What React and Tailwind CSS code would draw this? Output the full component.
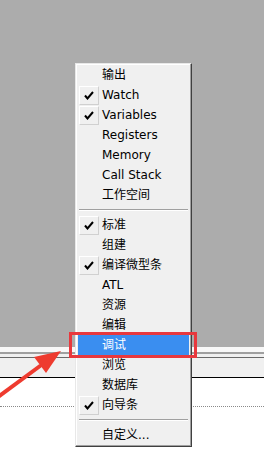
import React from 'react';

const items = [
  { label: '输出' },
  { label: 'Watch', checked: true },
  { label: 'Variables', checked: true },
  { label: 'Registers' },
  { label: 'Memory' },
  { label: 'Call Stack' },
  { label: '工作空间' },
  { sep: true },
  { label: '标准', checked: true },
  { label: '组建' },
  { label: '编译微型条', checked: true },
  { label: 'ATL' },
  { label: '资源' },
  { label: '编辑' },
  { label: '调试', active: true },
  { label: '浏览' },
  { label: '数据库' },
  { label: '向导条', checked: true },
  { sep: true },
  { label: '自定义...' },
];

function Check() {
  return (
    <svg width="10" height="9" viewBox="0 0 10 9">
      <path d="M1 4.5 L3.5 7.5 L9 1" fill="none" stroke="#000" strokeWidth="2" />
    </svg>
  );
}

export default function App() {
  return (
    <div
      className="relative w-[264px] h-[449px] overflow-hidden bg-white text-[12px] text-black"
      style={{ fontFamily: '"DejaVu Sans", "Noto Sans CJK SC", sans-serif' }}
    >
      {/* workspace background */}
      <div className="h-[347px] bg-[#acacac]" />
      <div className="h-[5px] bg-[#f8f8f8]" />
      <div className="h-[2px] bg-[#a0a0a0]" />
      <div className="h-[3px] bg-[#f0f0f0]" />
      <div className="h-px bg-[#696969]" />
      <div className="h-[19px] bg-[#f0f0f0]" />
      <div className="h-px bg-black" />
      <div className="h-[28px] bg-white" />
      <div className="border-t border-dotted border-[#8a8a8a]" />

      {/* popup menu */}
      <div className="absolute left-[75px] top-[63px] w-[117px] bg-[#f0f0f0] border border-t-[#e8e8e8] border-l-[#e8e8e8] border-r-[#404040] border-b-[#404040] shadow-[inset_-1px_-1px_0_#a0a0a0,inset_1px_1px_0_#ffffff] py-[1px] px-[2px]">
        {items.map((it, i) =>
          it.sep ? (
            <div key={i} className="h-[10px] flex items-center px-[1px]">
              <div className="w-full h-[2px] border-t border-[#a0a0a0] border-b border-b-white" />
            </div>
          ) : (
            <div
              key={i}
              className={
                'h-[20px] flex items-center ' +
                (it.active ? 'bg-[#3a8ef0] text-white' : '')
              }
            >
              <div className="w-[22px] h-[20px] flex items-center justify-center">
                {it.checked && (
                  <div className="w-[20px] h-[19px] flex items-center justify-center border border-t-[#ffffff] border-l-[#ffffff] border-r-[#d0d0d0] border-b-[#d0d0d0]">
                    <Check />
                  </div>
                )}
              </div>
              <span className="pl-[2px] leading-none whitespace-nowrap">{it.label}</span>
            </div>
          )
        )}
      </div>

      {/* red highlight box */}
      <div className="absolute left-[69px] top-[332px] w-[128px] h-[26px] border-[3px] border-[#e8383d]" />

      {/* red arrow */}
      <svg className="absolute left-0 top-[345px]" width="66" height="55" viewBox="0 0 66 55">
        <path d="M-2 52 L40 21" stroke="#ee3b2f" strokeWidth="4" strokeLinecap="round" />
        <path d="M61 6 L34 12 L46 28 Z" fill="#ee3b2f" />
      </svg>
    </div>
  );
}
